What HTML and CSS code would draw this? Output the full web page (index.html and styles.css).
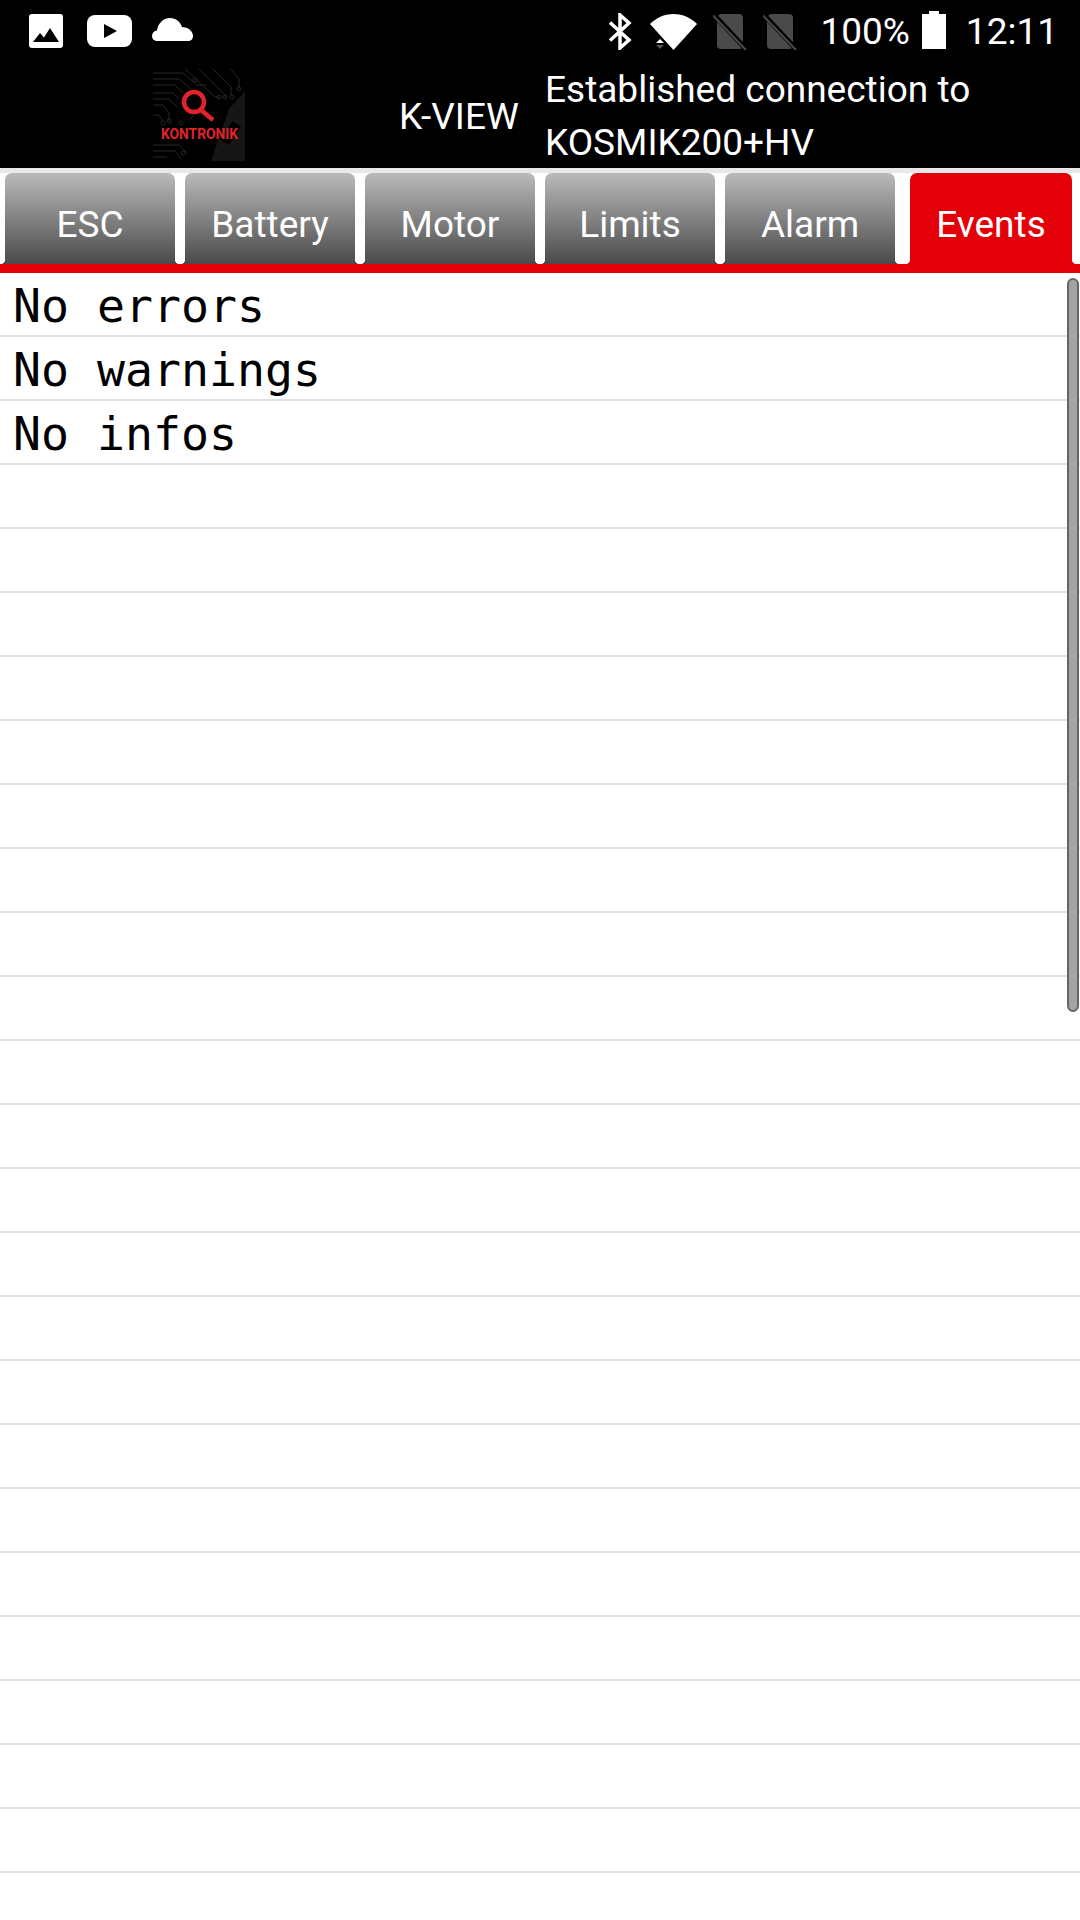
FILE: index.html
```html
<!DOCTYPE html>
<html lang="en">
<head>
    <meta charset="UTF-8">
    <meta name="viewport" content="width=device-width, initial-scale=1.0">
    <title>K-VIEW</title>
    <link rel="stylesheet" href="styles.css">
</head>
<body>
    <div class="statusbar">
        <div class="status-left">
            <svg class="ic-image" viewBox="0 0 34 34">
                <rect x="0" y="0" width="34" height="34" rx="3" fill="#fff"/>
                <path d="M4 28 L11 19 L15 23.500 L21 14 L30 28 Z" fill="#000"/>
            </svg>
            <svg class="ic-play" viewBox="0 0 45 32">
                <rect x="0" y="0" width="45" height="32" rx="8" fill="#fff"/>
                <path d="M17 9 L30 16 L17 23 Z" fill="#000"/>
            </svg>
            <svg class="ic-cloud" viewBox="0 0 41 23">
                <path d="M5 23 C2 23 0 20.500 0 18 C0 15 2 12.800 5 12.500 C6 5.500 11 0 18 0 C24 0 28 3.500 30 9 C36 9 41 13 41 18 C41 21 39 23 36 23 Z" fill="#fff"/>
            </svg>
        </div>
        <div class="status-right">
            <svg class="ic-bt" viewBox="0 0 24 37">
                <path d="M2 9.500 L21 27 L12 35 V2 L21 10 L2 27.500" fill="none" stroke="#fff" stroke-width="3.500"/>
            </svg>
            <svg class="ic-wifi" viewBox="0 0 47 36">
                <path d="M0 10 C6 4 14 0 23.500 0 C33 0 41 4 47 10 L23.500 36 Z" fill="#fff"/>
                <path d="M6 29 L10 25 L14 29 Z" fill="#fff"/>
                <path d="M6 31 L14 31 L10 35 Z" fill="#555"/>
            </svg>
            <svg class="ic-sim" viewBox="0 0 34 36">
                <path d="M7 0 H26 Q30 0 30 4 V31 Q30 35 26 35 H8 Q4 35 4 31 V3 Z" fill="#4a4a4a"/>
                <path d="M1 1 L33 35" stroke="#000" stroke-width="5"/>
                <path d="M0 1.500 L33 36" stroke="#4a4a4a" stroke-width="2"/>
            </svg>
            <svg class="ic-sim ic-sim2" viewBox="0 0 34 36">
                <path d="M7 0 H26 Q30 0 30 4 V31 Q30 35 26 35 H8 Q4 35 4 31 V3 Z" fill="#4a4a4a"/>
                <path d="M1 1 L33 35" stroke="#000" stroke-width="5"/>
                <path d="M0 1.500 L33 36" stroke="#4a4a4a" stroke-width="2"/>
            </svg>
            <span class="battery-text">100%</span>
            <svg class="ic-battery" viewBox="0 0 24 38">
                <path d="M7 0 H17 V3 H24 V38 H0 V3 H7 Z" fill="#fff"/>
            </svg>
            <span class="clock">12:11</span>
        </div>
    </div>

    <div class="appbar">
        <svg class="logo" viewBox="0 0 92 92">
            <path d="M58 92 L76 40 L92 22 V92 Z" fill="#161616"/>
            <path d="M66 70 L80 52 L88 58 L76 76 Z" fill="#000"/>
            <g fill="none" stroke="#262626" stroke-width="1">
                <path d="M0 4 H30 L44 16 H54"/>
                <path d="M0 10 H26 L38 20"/>
                <path d="M0 16 H22 L30 24"/>
                <path d="M0 24 H20 L26 30"/>
                <path d="M0 30 H16 L24 38"/>
                <path d="M0 36 H10 L16 44 V52"/>
                <path d="M0 46 H6 L10 52"/>
                <path d="M32 0 L62 28 H66"/>
                <path d="M46 0 L72 26 V28"/>
                <path d="M60 0 L78 18 V26"/>
                <path d="M78 0 L86 10 V18"/>
                <path d="M0 76 H26 L34 84"/>
                <path d="M0 82 H22 L28 90"/>
                <path d="M0 88 H14"/>
                <path d="M36 52 L42 44"/>
                <circle cx="42" cy="11" r="2"/>
                <circle cx="66" cy="28" r="2"/>
                <circle cx="72" cy="28" r="2"/>
                <circle cx="79" cy="28" r="2"/>
                <circle cx="86" cy="20" r="2"/>
                <circle cx="16" cy="52" r="2"/>
                <circle cx="10" cy="54" r="2"/>
                <circle cx="28" cy="54" r="2"/>
                <circle cx="30" cy="84" r="2"/>
            </g>
            <circle cx="41" cy="33" r="10" fill="none" stroke="#e3232c" stroke-width="4.500"/>
            <path d="M48 41 L60 51" stroke="#e3232c" stroke-width="4.500"/>
            <text class="logo-text" x="8" y="70" textLength="77" lengthAdjust="spacingAndGlyphs">KONTRONIK</text>
        </svg>
        <div class="app-name">K-VIEW</div>
        <div class="app-message">Established connection to<br>KOSMIK200+HV</div>
    </div>

    <div class="tabs-wrap">
        <div class="tabs">
            <div class="tab">ESC</div>
            <div class="tab">Battery</div>
            <div class="tab">Motor</div>
            <div class="tab">Limits</div>
            <div class="tab">Alarm</div>
            <div class="tab tab-active">Events</div>
        </div>
    </div>

    <div class="list">
        <div class="row">No errors</div>
        <div class="row">No warnings</div>
        <div class="row">No infos</div>
        <div class="row"></div>
        <div class="row"></div>
        <div class="row"></div>
        <div class="row"></div>
        <div class="row"></div>
        <div class="row"></div>
        <div class="row"></div>
        <div class="row"></div>
        <div class="row"></div>
        <div class="row"></div>
        <div class="row"></div>
        <div class="row"></div>
        <div class="row"></div>
        <div class="row"></div>
        <div class="row"></div>
        <div class="row"></div>
        <div class="row"></div>
        <div class="row"></div>
        <div class="row"></div>
        <div class="row"></div>
        <div class="row"></div>
        <div class="row"></div>
        <div class="row"></div>
        <div class="scrollbar"></div>
    </div>
</body>
</html>
```

FILE: styles.css
```css
body {
    margin: 0;
    background: #fff;
    font-family: Roboto, "Noto Sans", sans-serif;
    height: 1920px;
    overflow: hidden;
}
svg {
    display: block;
    flex: none;
}

/* status bar */
.statusbar {
    height: 60px;
    background: #000;
    color: #fff;
    display: flex;
    justify-content: space-between;
    align-items: center;
    padding: 0 22px 0 29px;
}
.status-left, .status-right {
    display: flex;
    align-items: center;
}
.ic-image { width: 34px; height: 34px; margin-top: 2px; }
.ic-play { width: 45px; height: 32px; margin-left: 24px; margin-top: 2px; }
.ic-cloud { width: 41px; height: 23px; margin-left: 20px; margin-top: -1px; }
.ic-bt { width: 24px; height: 37px; margin-top: 2px; }
.ic-wifi { width: 47px; height: 36px; margin-left: 18px; margin-top: 4px; }
.ic-sim { width: 34px; height: 36px; margin-left: 16px; margin-top: 4px; }
.ic-sim2 { margin-left: 16px; }
.battery-text, .clock {
    font-size: 37px;
    line-height: 40px;
    margin-top: 4px;
    font-weight: 400;
}
.battery-text { margin-left: 23px; }
.ic-battery { width: 24px; height: 38px; margin-left: 12px; }
.clock { margin-left: 20px; }

/* app header */
.appbar {
    height: 108px;
    background: #000;
    color: #fff;
    display: grid;
    grid-template-columns: 399px 146px 1fr;
    font-size: 37px;
}
.logo {
    width: 92px;
    height: 92px;
    margin: 9px 0 0 153px;
}
.logo-text {
    font-family: Roboto, sans-serif;
    font-weight: 700;
    font-size: 15px;
    fill: #e3232c;
}
.app-name {
    align-self: center;
    margin-top: 4px;
}
.app-message {
    line-height: 53px;
    margin-top: 3px;
}

/* tabs */
.tabs-wrap {
    background: #fff;
    border-top: 5px solid #e8e8e8;
    border-bottom: 9px solid #e30008;
}
.tabs {
    display: flex;
    padding-left: 5px;
    gap: 10px;
    height: 91px;
}
.tab {
    position: relative;
    width: 170px;
    background: linear-gradient(#bababa, #4a4a4a);
    border-radius: 7px 7px 0 0;
    color: #fff;
    font-size: 37px;
    display: flex;
    align-items: center;
    justify-content: center;
    padding-top: 12px;
    box-sizing: border-box;
}
.tab::after, .tab::before {
    content: "";
    position: absolute;
    bottom: 0;
    width: 5px;
    height: 5px;
}
.tab::after {
    right: -5px;
    background: radial-gradient(circle at 100% 0, #fff 5px, #4a4a4a 5.500px);
}
.tab::before {
    left: -5px;
    background: radial-gradient(circle at 0 0, #fff 5px, #4a4a4a 5.500px);
}
.tab-active {
    width: 162px;
    margin-left: 5px;
    background: #e30008;
}
.tab-active::after {
    background: radial-gradient(circle at 100% 0, #fff 5px, #e30008 5.500px);
}
.tab-active::before {
    background: radial-gradient(circle at 0 0, #fff 5px, #e30008 5.500px);
}

/* event list */
.list {
    position: relative;
}
.row {
    height: 62px;
    border-bottom: 2px solid #e2e2e2;
    padding-left: 13px;
    font-family: "DejaVu Sans Mono", "Liberation Mono", monospace;
    font-size: 46.500px;
    line-height: 67px;
    color: #000;
}
.scrollbar {
    position: absolute;
    top: 5px;
    right: 1px;
    width: 12px;
    height: 734px;
    box-sizing: border-box;
    border: 2px solid #666;
    border-radius: 6px;
    background: #a4a4a4;
}
```
